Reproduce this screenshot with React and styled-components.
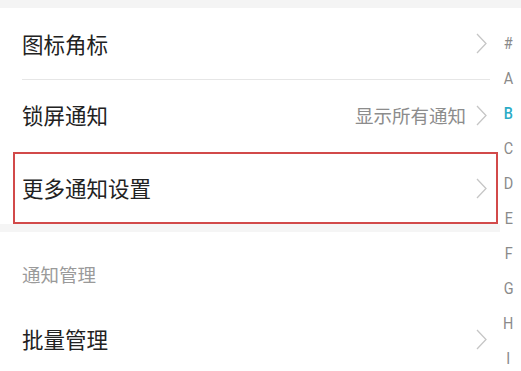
import React from "react";
import styled, { createGlobalStyle } from "styled-components";

const GlobalStyle = createGlobalStyle`
  html, body {
    margin: 0;
    padding: 0;
    background: #ffffff;
  }
  body {
    font-family: "Noto Sans CJK SC", "Noto Sans", sans-serif;
  }
`;

const indexLetters = ["#", "A", "B", "C", "D", "E", "F", "G", "H", "I"];

const Chevron = () => (
  <svg width="11" height="21" viewBox="0 0 11 21" fill="none">
    <path d="M1 1 L10 10.5 L1 20" stroke="#c6c6c6" strokeWidth="1.3" />
  </svg>
);

const SettingsPage = () => {
  return (
    <Page>
      <TopBand />
      <Row $height={71}>
        <Label>图标角标</Label>
        <Chevron />
      </Row>
      <Divider />
      <Row $height={70}>
        <Label>锁屏通知</Label>
        <RightGroup>
          <Value>显示所有通知</Value>
          <Chevron />
        </RightGroup>
      </Row>
      <Row $height={72} $highlighted>
        <Label>更多通知设置</Label>
        <Chevron />
      </Row>
      <GrayBand />
      <SectionHeader>通知管理</SectionHeader>
      <Row $height={62}>
        <Label>批量管理</Label>
        <Chevron />
      </Row>
      <IndexBar>
        {indexLetters.map((l) => (
          <IndexLetter key={l} $active={l === "B"}>
            {l}
          </IndexLetter>
        ))}
      </IndexBar>
    </Page>
  );
};

export default function App() {
  return (
    <>
      <GlobalStyle />
      <SettingsPage />
    </>
  );
}

const Page = styled.div`
  position: relative;
  width: 521px;
  height: 371px;
  overflow: hidden;
  background: #ffffff;
`;

const TopBand = styled.div`
  height: 8px;
  background: #f4f4f4;
`;

const Row = styled.div`
  width: 500px;
  box-sizing: border-box;
  height: ${(p) => p.$height}px;
  display: flex;
  align-items: center;
  justify-content: space-between;
  padding: 0 13px 0 22px;
  ${(p) =>
    p.$highlighted &&
    `
    width: 485px;
    margin: 2px 0 0 13px;
    border: 2px solid #d24a4a;
    padding: 0 9px 0 7px;
  `}
`;

const Label = styled.span`
  font-size: 21.5px;
  line-height: 28px;
  color: #222222;
`;

const RightGroup = styled.div`
  display: flex;
  align-items: center;
  gap: 10px;
`;

const Value = styled.span`
  font-size: 18.5px;
  line-height: 24px;
  color: #8c8c8c;
`;

const Divider = styled.div`
  height: 1px;
  margin: 0 31px 0 22px;
  width: 468px;
  background: #e6e6e6;
`;

const GrayBand = styled.div`
  height: 8px;
  width: 500px;
  background: #f5f5f5;
`;

const SectionHeader = styled.div`
  height: 76px;
  box-sizing: border-box;
  padding: 32px 0 0 22px;
  font-size: 18.5px;
  line-height: 20px;
  color: #9a9a9a;
`;

const IndexBar = styled.div`
  position: absolute;
  top: 25.5px;
  right: 0;
  width: 25px;
  display: flex;
  flex-direction: column;
  align-items: center;
  font-family: Roboto, "Liberation Sans", sans-serif;
`;

const IndexLetter = styled.div`
  height: 35px;
  line-height: 35px;
  font-size: 17px;
  color: ${(p) => (p.$active ? "#2aabc6" : "#8a8a8a")};
  font-weight: ${(p) => (p.$active ? 500 : 400)};
  transform: scaleX(0.85);
`;
